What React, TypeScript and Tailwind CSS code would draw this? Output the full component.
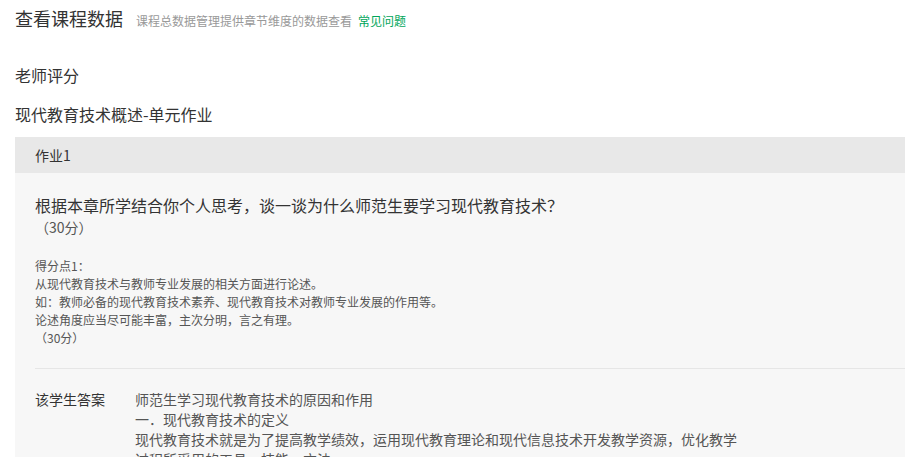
import React from "react";

const scorePoints = [
  "得分点1：",
  "从现代教育技术与教师专业发展的相关方面进行论述。",
  "如：教师必备的现代教育技术素养、现代教育技术对教师专业发展的作用等。",
  "论述角度应当尽可能丰富，主次分明，言之有理。",
  "（30分）",
];

const App = () => {
  return (
    <main
      className="h-[457px] bg-white text-[#333] overflow-hidden"
      style={{ fontFamily: '"Noto Sans CJK SC", "Liberation Sans", sans-serif' }}
    >
      <div className="flex items-baseline h-[36px] pt-[5px] px-[15px]">
        <h1 className="text-[18px] leading-[26px] font-normal">查看课程数据</h1>
        <span className="ml-[13px] text-[12px] text-[#999]">课程总数据管理提供章节维度的数据查看</span>
        <a href="#" className="ml-[6px] text-[12px] text-[#00a65a]">常见问题</a>
      </div>

      <div className="mt-[27px] px-[15px] text-[16px] leading-[24px]">老师评分</div>
      <div className="mt-[15px] px-[15px] text-[16px] leading-[24px]">现代教育技术概述-单元作业</div>

      <div className="mt-[11px] ml-[15px]">
        <div className="h-[36px] bg-[#e8e8e8] flex items-center px-[20px] text-[14px]">作业1</div>
        <div className="bg-[#f7f7f7] pl-[20px] pt-[20px] pb-[40px]">
          <p className="text-[16px] leading-[24px]">根据本章所学结合你个人思考，谈一谈为什么师范生要学习现代教育技术？</p>
          <p className="text-[14px] leading-[20px] text-[#555]">（30分）</p>

          <div className="mt-[20px] text-[12px] leading-[18px] text-[#555]">
            {scorePoints.map((line) => (
              <p key={line}>{line}</p>
            ))}
          </div>

          <div className="mt-[21px] border-t border-[#e6e6e6]" />

          <div className="mt-[20px] flex text-[14px] leading-[20px]">
            <div className="w-[100px] shrink-0">该学生答案</div>
            <div className="w-[610px] text-[#555]">
              <p>师范生学习现代教育技术的原因和作用</p>
              <p>一．现代教育技术的定义</p>
              <p>现代教育技术就是为了提高教学绩效，运用现代教育理论和现代信息技术开发教学资源，优化教学过程所采用的工具、技能、方法。</p>
            </div>
          </div>
        </div>
      </div>
    </main>
  );
};

export default App;
